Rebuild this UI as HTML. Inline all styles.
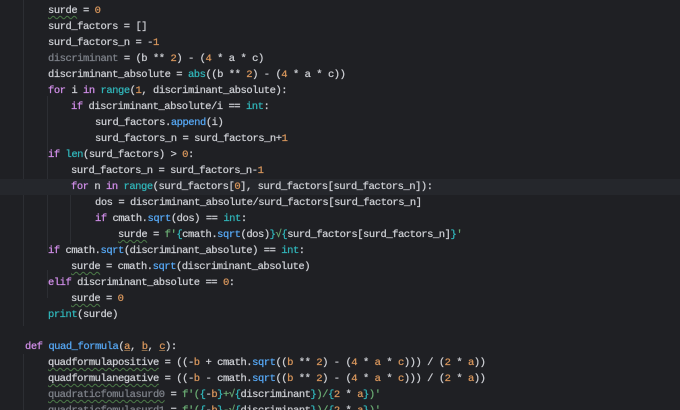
<!DOCTYPE html>
<html><head><meta charset="utf-8"><style>
html,body{margin:0;padding:0;width:680px;height:410px;overflow:hidden;background:#1f2024;}
.ed{position:relative;width:680px;height:410px;font-family:"Liberation Mono","DejaVu Sans Mono",monospace;font-size:10.5px;letter-spacing:-0.47px;color:#cdcfd4;-webkit-text-stroke:0.25px currentColor;}
.l{position:absolute;left:0;height:16px;line-height:16px;white-space:pre;width:680px;margin-top:1px;}
.hl{background:#25272c;}
.g{position:absolute;width:1px;background:#2c2e33;}
.k{color:#d08ee8}.b{color:#30b6ba}.m{color:#56a8f5}.n{color:#d8965c}.s{color:#6aab73}.d{color:#7e828a}.p{color:#d8965c;text-decoration:underline;text-decoration-color:#8a6a4a}
.w{text-decoration:underline wavy #4c7a48;text-decoration-thickness:1px;text-underline-offset:2px}
</style></head><body><div class="ed">
<div class="g" style="left:23px;top:0;height:326px"></div>
<div class="g" style="left:47px;top:96px;height:82px"></div>
<div class="g" style="left:47px;top:176px;height:76px"></div>
<div class="g" style="left:70px;top:194px;height:50px"></div>
<div class="g" style="left:47px;top:270px;height:28px"></div>
<div class="g" style="left:23px;top:354px;height:60px"></div>
<div class="l" style="top:2px;left:48px"><span class="w">surde</span> = <span class="n">0</span></div>
<div class="l" style="top:18px;left:48px">surd_factors = []</div>
<div class="l" style="top:34px;left:48px">surd_factors_n = -<span class="n">1</span></div>
<div class="l" style="top:50px;left:48px"><span class="d">discriminant</span> = (b ** <span class="n">2</span>) - (<span class="n">4</span> * a * c)</div>
<div class="l" style="top:66px;left:48px">discriminant_absolute = <span class="b">abs</span>((b ** <span class="n">2</span>) - (<span class="n">4</span> * a * c))</div>
<div class="l" style="top:82px;left:48px"><span class="k">for</span> i <span class="k">in</span> <span class="b">range</span>(<span class="n">1</span>, discriminant_absolute):</div>
<div class="l" style="top:98px;left:71px"><span class="k">if</span> discriminant_absolute/i == <span class="b">int</span>:</div>
<div class="l" style="top:114px;left:95px">surd_factors.<span class="m">append</span>(i)</div>
<div class="l" style="top:130px;left:95px">surd_factors_n = surd_factors_n+<span class="n">1</span></div>
<div class="l" style="top:146px;left:48px"><span class="k">if</span> <span class="b">len</span>(surd_factors) &gt; <span class="n">0</span>:</div>
<div class="l" style="top:162px;left:71px">surd_factors_n = surd_factors_n-<span class="n">1</span></div>
<div class="l hl" style="top:178px;left:0"><span style="padding-left:71px"><span class="k">for</span> n <span class="k">in</span> <span class="b">range</span>(surd_factors[<span class="n">0</span>], surd_factors[surd_factors_n]):</span></div>
<div class="l" style="top:194px;left:95px">dos = discriminant_absolute/surd_factors[surd_factors_n]</div>
<div class="l" style="top:210px;left:95px"><span class="k">if</span> cmath.<span class="m">sqrt</span>(dos) == <span class="b">int</span>:</div>
<div class="l" style="top:226px;left:118px"><span class="w">surde</span> = <span class="s">f'</span><span class="b">{</span>cmath.<span class="m">sqrt</span>(dos)<span class="b">}</span><span class="s">√</span><span class="b">{</span>surd_factors[surd_factors_n]<span class="b">}</span><span class="s">'</span></div>
<div class="l" style="top:242px;left:48px"><span class="k">if</span> cmath.<span class="m">sqrt</span>(discriminant_absolute) == <span class="b">int</span>:</div>
<div class="l" style="top:258px;left:71px"><span class="w">surde</span> = cmath.<span class="m">sqrt</span>(discriminant_absolute)</div>
<div class="l" style="top:274px;left:48px"><span class="k">elif</span> discriminant_absolute == <span class="n">0</span>:</div>
<div class="l" style="top:290px;left:71px"><span class="w">surde</span> = <span class="n">0</span></div>
<div class="l" style="top:306px;left:48px"><span class="b">print</span>(surde)</div>
<div class="l" style="top:338px;left:25px"><span class="k">def</span> <span class="m">quad_formula</span>(<span class="p">a</span>, <span class="p">b</span>, <span class="p">c</span>):</div>
<div class="l" style="top:354px;left:48px"><span class="w">quadformulapositive</span> = ((-<span class="n">b</span> + cmath.<span class="m">sqrt</span>((<span class="n">b</span> ** <span class="n">2</span>) - (<span class="n">4</span> * <span class="n">a</span> * <span class="n">c</span>))) / (<span class="n">2</span> * <span class="n">a</span>))</div>
<div class="l" style="top:370px;left:48px"><span class="w">quadformulanegative</span> = ((-<span class="n">b</span> - cmath.<span class="m">sqrt</span>((<span class="n">b</span> ** <span class="n">2</span>) - (<span class="n">4</span> * <span class="n">a</span> * <span class="n">c</span>))) / (<span class="n">2</span> * <span class="n">a</span>))</div>
<div class="l" style="top:386px;left:48px"><span class="d w">quadraticfomulasurd0</span> = <span class="s">f'(</span><span class="b">{</span>-<span class="n">b</span><span class="b">}</span><span class="s">+√</span><span class="b">{</span>discriminant<span class="b">}</span><span class="s">)/</span><span class="b">{</span><span class="n">2</span> * <span class="n">a</span><span class="b">}</span><span class="s">)'</span></div>
<div class="l" style="top:402px;left:48px"><span class="d w">quadraticfomulasurd1</span> = <span class="s">f'(</span><span class="b">{</span>-<span class="n">b</span><span class="b">}</span><span class="s">-√</span><span class="b">{</span>discriminant<span class="b">}</span><span class="s">)/</span><span class="b">{</span><span class="n">2</span> * <span class="n">a</span><span class="b">}</span><span class="s">)'</span></div>
</div></body></html>
